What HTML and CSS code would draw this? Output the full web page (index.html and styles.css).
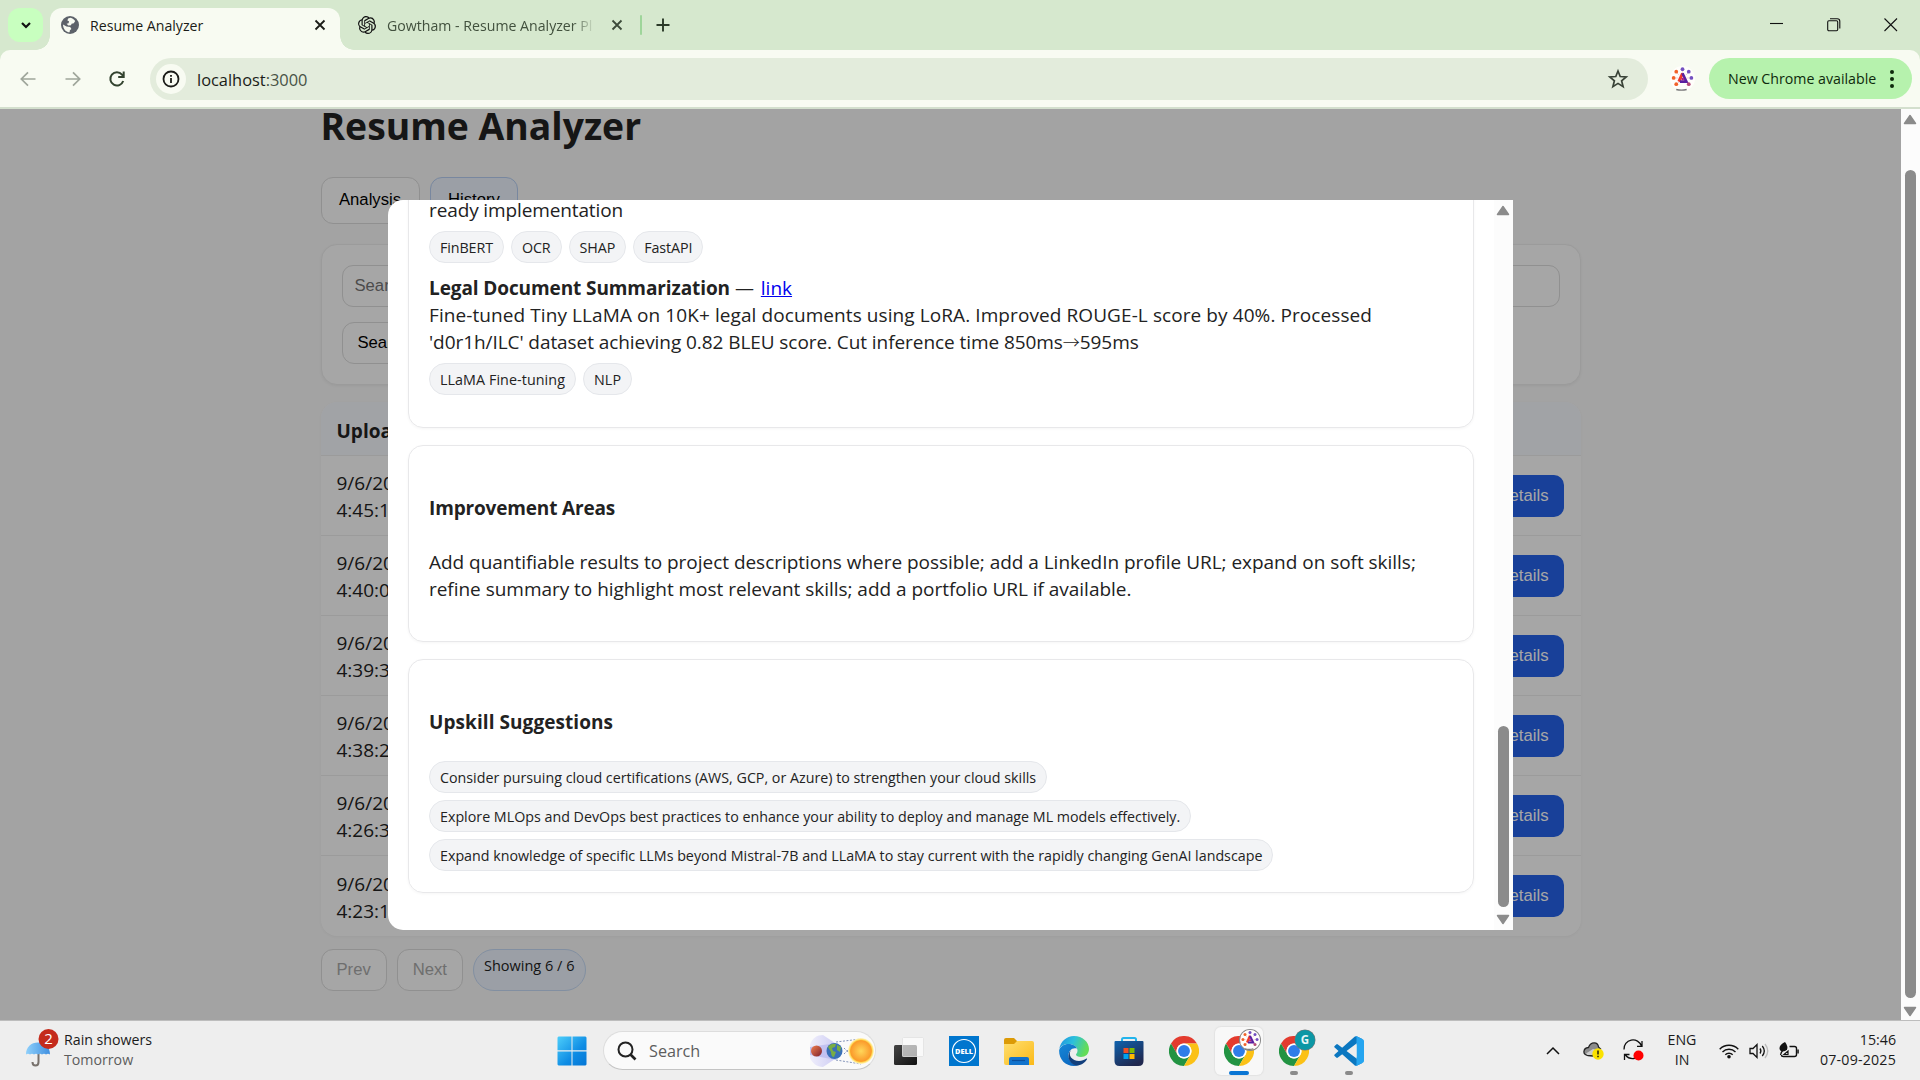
FILE: index.html
```html
<!DOCTYPE html>
<html lang="en">
<head>
<meta charset="utf-8">
<title>Resume Analyzer</title>
<link rel="stylesheet" href="styles.css">
</head>
<body>
<svg class="defs" aria-hidden="true">
  <symbol id="chrome" viewBox="0 0 48 48">
    <path fill="#e33b2e" d="M24 12H44.8A24 24 0 0 0 3.2 12L13.6 30A12 12 0 0 1 24 12Z"/>
    <path fill="#229342" d="M34.4 30L24 48A24 24 0 0 1 3.2 12L13.6 30A12 12 0 0 0 34.4 30Z"/>
    <path fill="#fbc116" d="M24 12H44.8A24 24 0 0 1 24 48L34.4 30A12 12 0 0 0 24 12Z"/>
    <circle cx="24" cy="24" r="12" fill="#fff"/><circle cx="24" cy="24" r="9.5" fill="#2f7de9"/>
  </symbol>
  <symbol id="avatar" viewBox="0 0 24 24">
    <circle cx="12" cy="12" r="12" fill="#fffefb"/>
    <g fill="none" stroke="#e8b9c9" stroke-width=".6"><path d="M12 4v4M6 6l3 3M18 6l-3 3M4 11.500h4M20 11.500h-4M6 18l3-3M18 18l-3-3"/></g>
    <path d="M12 7L8.500 15" stroke="#f0392b" stroke-width="2.800" fill="none"/>
    <path d="M12 7L15.800 15H9.500" stroke="#5a1fa0" stroke-width="2.500" fill="none"/>
    <circle cx="12.200" cy="12.500" r="1.300" fill="#b01c7c"/>
    <g fill="#f2622a"><circle cx="6" cy="5.500" r="1.800"/><circle cx="3.500" cy="11.500" r="1.800"/><circle cx="6" cy="17.500" r="1.800"/></g>
    <g fill="#7350c0"><circle cx="12" cy="3" r="1.800"/><circle cx="18" cy="5.500" r="1.800"/><circle cx="20.500" cy="11.500" r="1.800"/></g>
    <circle cx="18" cy="17.500" r="1.800" fill="#b44a78"/>
    <path d="M6 22.500q5 1.300 10 0" stroke="#777" stroke-width="1.400" fill="none"/>
  </symbol>
</svg>

<header class="tabstrip">
  <button class="tab-search"><svg width="14" height="14" viewBox="0 0 14 14"><path d="M3 5l4 4 4-4"/></svg></button>
  <div class="tab active">
    <svg class="fav" width="18" height="18" viewBox="0 0 18 18"><circle cx="9" cy="9" r="9" fill="#5d626a"/><path fill="#f8fbf2" d="M9.500 1.800c2 .6 3.600 1.700 4.700 3.200l-1.400 2.300-2.200.4-.6 1.500-2.600.3-1.800-1.800 2-.5.4-2-1.600-.8.700-2zM2 8.400l3.500 2.200 3.700.3 1.200 2.200-1.500 1.200-.3 2C4.800 15.900 2 12.800 2 8.400z"/></svg>
    <span class="tab-title">Resume Analyzer</span>
    <svg class="x" width="12" height="12" viewBox="0 0 12 12"><path d="M1.500 1.500l9 9M10.500 1.500l-9 9"/></svg>
  </div>
  <div class="tab second">
    <svg class="fav" width="18" height="18" viewBox="0 0 24 24"><path fill="#111" d="M22.282 9.821a5.985 5.985 0 0 0-.516-4.910 6.046 6.046 0 0 0-6.510-2.900A6.065 6.065 0 0 0 4.981 4.182a5.985 5.985 0 0 0-3.998 2.900 6.046 6.046 0 0 0 .743 7.097 5.980 5.980 0 0 0 .511 4.911 6.051 6.051 0 0 0 6.515 2.900A5.985 5.985 0 0 0 13.260 24a6.056 6.056 0 0 0 5.772-4.206 5.989 5.989 0 0 0 3.998-2.900 6.056 6.056 0 0 0-.748-7.073zm-9.022 12.608a4.476 4.476 0 0 1-2.876-1.041l.142-.080 4.778-2.758a.795.795 0 0 0 .393-.681v-6.737l2.020 1.169a.071.071 0 0 1 .038.052v5.583a4.504 4.504 0 0 1-4.495 4.494zm-9.661-4.125a4.471 4.471 0 0 1-.535-3.014l.142.085 4.783 2.758a.771.771 0 0 0 .781 0l5.843-3.369v2.332a.080.080 0 0 1-.033.062L9.740 19.950a4.499 4.499 0 0 1-6.141-1.646zM2.341 7.896a4.485 4.485 0 0 1 2.366-1.973V11.600a.766.766 0 0 0 .388.677l5.814 3.354-2.020 1.169a.076.076 0 0 1-.071 0l-4.830-2.787A4.504 4.504 0 0 1 2.341 7.872zm16.596 3.856L13.104 8.364 15.119 7.200a.076.076 0 0 1 .071 0l4.830 2.791a4.494 4.494 0 0 1-.677 8.104v-5.677a.790.790 0 0 0-.407-.667zm2.011-3.023l-.142-.085-4.774-2.782a.776.776 0 0 0-.785 0L9.409 9.230V6.897a.066.066 0 0 1 .028-.062l4.830-2.787a4.499 4.499 0 0 1 6.680 4.660zM8.307 12.863l-2.020-1.164a.080.080 0 0 1-.038-.057V6.074a4.499 4.499 0 0 1 7.376-3.454l-.142.081L8.704 5.459a.795.795 0 0 0-.393.681zm1.098-2.365l2.602-1.500 2.607 1.500v2.999l-2.597 1.500-2.607-1.500Z"/></svg>
    <span class="tab-title fade">Gowtham - Resume Analyzer Pl</span>
    <svg class="x dim" width="12" height="12" viewBox="0 0 12 12"><path d="M1.500 1.500l9 9M10.500 1.500l-9 9"/></svg>
  </div>
  <i class="tab-sep"></i>
  <svg class="plus" width="14" height="14" viewBox="0 0 14 14"><path d="M7 .5v13M.5 7h13"/></svg>
  <div class="winctl">
    <svg width="14" height="14" viewBox="0 0 14 14"><path d="M0 5.500h13"/></svg>
    <svg width="14" height="14" viewBox="0 0 14 14"><rect x=".7" y="2.700" width="10" height="10" rx="1.200"/><path d="M3 .7h7.300q2.500 0 2.500 2.500V10.500"/></svg>
    <svg width="14" height="14" viewBox="0 0 14 14"><path d="M.5.500l12.500 12.500M13 .5L.5 13"/></svg>
  </div>
</header>

<nav class="toolbar">
  <svg class="nav off" width="16" height="16" viewBox="0 0 16 16"><path d="M15.500 8H1.500M8 1.300L1.300 8 8 14.700"/></svg>
  <svg class="nav off" width="16" height="16" viewBox="0 0 16 16"><path d="M.5 8h14M8 1.300L14.700 8 8 14.700"/></svg>
  <svg class="nav" width="16" height="16" viewBox="0 0 16 16"><path d="M14.200 10A6.600 6.600 0 1 1 13 3.700L14.500 5.500M14.700.5v5.500H9.200"/></svg>
  <div class="omnibox">
    <span class="info"><svg width="18" height="18" viewBox="0 0 18 18"><circle cx="9" cy="9" r="7.500"/><path d="M9 8v5M9 5v1.700"/></svg></span>
    <span class="url">localhost<em>:3000</em></span>
    <svg class="star" width="20" height="20" viewBox="0 0 20 20"><path d="M10 2l2.200 5.500 6 .4-4.600 3.900 1.500 5.800L10 14.400l-5.100 3.200 1.500-5.800L1.800 7.900l6-.4z"/></svg>
  </div>
  <svg class="profile" width="25" height="25"><use href="#avatar"/></svg>
  <button class="update"><span>New Chrome available</span><i class="dots"></i></button>
</nav>

<main class="viewport">
  <div class="page">
    <div class="content">
      <h1>Resume Analyzer</h1>
      <div class="tabs"><button class="btn">Analysis</button><button class="btn on">History</button></div>
      <section class="filter">
        <input type="text" placeholder="Search by name">
        <button class="btn">Search</button>
      </section>
      <section class="table">
        <div class="thead">Uploaded</div>
        <div class="row"><p>9/6/2025,<br>4:45:10</p><button class="details">Details</button></div>
        <div class="row"><p>9/6/2025,<br>4:40:00</p><button class="details">Details</button></div>
        <div class="row"><p>9/6/2025,<br>4:39:30</p><button class="details">Details</button></div>
        <div class="row"><p>9/6/2025,<br>4:38:20</p><button class="details">Details</button></div>
        <div class="row"><p>9/6/2025,<br>4:26:30</p><button class="details">Details</button></div>
        <div class="row"><p>9/6/2025,<br>4:23:10</p><button class="details">Details</button></div>
      </section>
      <div class="pager"><button class="btn" disabled>Prev</button><button class="btn" disabled>Next</button><span class="count">Showing 6 / 6</span></div>
    </div>
    <div class="overlay">
      <div class="modal">
        <div class="modal-body">
          <section class="card projects">
            <p class="t-ready">ready implementation</p>
            <div class="chips"><span>FinBERT</span><span>OCR</span><span>SHAP</span><span>FastAPI</span></div>
            <p class="project"><b>Legal Document Summarization</b> — <a href="#">link</a></p>
            <p class="t-fine">Fine-tuned Tiny LLaMA on 10K+ legal documents using LoRA. Improved ROUGE-L score by 40%. Processed</p>
            <p class="t-data">'d0r1h/ILC' dataset achieving 0.82 BLEU score. Cut inference time 850ms<span class="arrow">→</span>595ms</p>
            <div class="chips wide"><span>LLaMA Fine-tuning</span><span>NLP</span></div>
          </section>
          <section class="card areas">
            <h3 class="t-imp">Improvement Areas</h3>
            <p>Add quantifiable results to project descriptions where possible; add a LinkedIn profile URL; expand on soft skills;<br>refine summary to highlight most relevant skills; add a portfolio URL if available.</p>
          </section>
          <section class="card upskill">
            <h3>Upskill Suggestions</h3>
            <div class="chips column">
              <span>Consider pursuing cloud certifications (AWS, GCP, or Azure) to strengthen your cloud skills</span>
              <span>Explore MLOps and DevOps best practices to enhance your ability to deploy and manage ML models effectively.</span>
              <span>Expand knowledge of specific LLMs beyond Mistral-7B and LLaMA to stay current with the rapidly changing GenAI landscape</span>
            </div>
          </section>
        </div>
        <div class="scrollbar inner"><svg width="14" height="11" viewBox="0 0 14 11"><path d="M7 1.500L12.500 9.500h-11z"/></svg><i></i><svg width="14" height="11" viewBox="0 0 14 11"><path d="M7 9.500L1.500 1.500h11z"/></svg></div>
      </div>
    </div>
  </div>
  <div class="scrollbar outer"><svg width="14" height="11" viewBox="0 0 14 11"><path d="M7 1.500L12.500 9.500h-11z"/></svg><i></i><svg width="14" height="11" viewBox="0 0 14 11"><path d="M7 9.500L1.500 1.500h11z"/></svg></div>
</main>

<footer class="taskbar">
  <div class="weather">
    <svg width="35" height="40" viewBox="0 0 35 40">
      <defs><linearGradient id="um" x2="1"><stop offset="0" stop-color="#8fd0fb"/><stop offset="1" stop-color="#3f8fe0"/></linearGradient></defs>
      <path d="M12.500 22v9q0 3.500-3 3.500T6.500 31" fill="none" stroke="#77716c" stroke-width="2"/>
      <path d="M0 23.500C0 16 5 11.500 12 11.500s12 4.500 12 12q-2-1.700-4 0-2-1.700-4 0-2-1.700-4 0-2-1.700-4 0-2-1.700-4 0-2-1.700-4 0z" fill="url(#um)"/>
      <circle cx="22.500" cy="8" r="10" fill="#c42b1c"/>
      <text x="22.500" y="13.300" text-anchor="middle" fill="#fff" font-size="15">2</text>
    </svg>
    <div class="forecast"><span>Rain showers</span><span class="t-tom">Tomorrow</span></div>
  </div>
  <svg class="start" width="30" height="30" viewBox="0 0 30 30">
    <defs><linearGradient id="win" x2="1" y2="1" gradientUnits="userSpaceOnUse" gradientTransform="scale(30)"><stop offset="0" stop-color="#4fd0fb"/><stop offset=".6" stop-color="#0e8ce4"/><stop offset="1" stop-color="#0474d4"/></linearGradient></defs>
    <path fill="url(#win)" d="M1.500.5H14.500v13.800H.5V1.500zM15.500.5H28.500l1 1v12.800H15.500zM.5 15.500H14.500v14H1.500l-1-1zM15.500 15.500H29.500v13l-1 1H15.500z"/>
  </svg>
  <div class="search">
    <svg width="20" height="20" viewBox="0 0 20 20"><circle cx="8.500" cy="8.500" r="7" fill="none" stroke="#222" stroke-width="2"/><path d="M13.500 13.500l5 5" stroke="#222" stroke-width="2.600"/></svg>
    <span>Search</span>
    <svg class="orbit" width="66" height="34" viewBox="0 0 66 34">
      <defs>
        <linearGradient id="beam" x2="1"><stop offset="0" stop-color="#efeefb"/><stop offset="1" stop-color="#cfcef4"/></linearGradient>
        <radialGradient id="sun"><stop offset="0" stop-color="#ffd75a"/><stop offset=".8" stop-color="#fb9a2b"/><stop offset=".83" stop-color="#fdbb36"/><stop offset=".9" stop-color="#ffe373"/><stop offset="1" stop-color="#fff6d0"/></radialGradient>
        <linearGradient id="mars" x2="1" y2="1"><stop offset="0" stop-color="#f2804f"/><stop offset="1" stop-color="#7c1f2e"/></linearGradient>
      </defs>
      <path d="M2 11C4 4 9 1 15 1L27 9V25L15 33C9 33 4 29 2 24z" fill="url(#beam)"/><path d="M2 13L28 9v17L2 21z" fill="#c3c2f1"/>
      <path d="M28 8L53 5M28 26l25 4M36 14l6 6M36 20l6-6" stroke="#6578a8" stroke-width=".8" stroke-dasharray="2 1.500"/>
      <circle cx="8.500" cy="17" r="5.500" fill="url(#mars)"/>
      <circle cx="26.500" cy="17" r="8" fill="#3a70b8"/><path d="M20 13q3-4 8-3l-1 3-3 1 1 3 3 1-2 5q-3 0-3-5zM29 11l4 2-1 5-3-2z" fill="#79ad45"/>
      <circle cx="53" cy="17" r="13" fill="url(#sun)"/>
    </svg>
  </div>
  <div class="apps">
    <span class="tile"><svg width="30" height="30" viewBox="0 0 30 30"><defs><linearGradient id="tv" x2="1" y2="1"><stop offset="0" stop-color="#444"/><stop offset="1" stop-color="#111"/></linearGradient></defs><rect x="0" y="9" width="23" height="20" rx="1.500" fill="url(#tv)"/><rect x="8" y="1" width="22" height="20" rx="1.500" fill="#fff" fill-opacity=".5"/><rect x="8.500" y="1.500" width="21" height="19" rx="1" fill="#fff" fill-opacity=".3" stroke="#ddd" stroke-opacity=".7"/></svg></span>
    <span class="tile"><svg width="30" height="30" viewBox="0 0 30 30"><path fill="#0076ce" d="M0 0h30v30H0z"/><circle cx="15" cy="15" r="11.500" fill="none" stroke="#fff" stroke-width="1.200"/><text x="15" y="17.900" font-size="7.500" font-weight="800" text-anchor="middle" textLength="18" lengthAdjust="spacingAndGlyphs" fill="#fff">DELL</text></svg></span>
    <span class="tile"><svg width="30" height="30" viewBox="0 0 30 30"><defs><linearGradient id="fo" x2="1" y2="1"><stop offset="0" stop-color="#ffdf70"/><stop offset="1" stop-color="#fbb917"/></linearGradient></defs><path fill="#dc9a06" d="M0 4q0-2 2-2h8l3 3v5H0z"/><path fill="url(#fo)" d="M0 8h10l3-3h15q2 0 2 2v22H2q-2 0-2-2z"/><path fill="#1273cc" d="M5 29v-6q0-2 2-2h16q2 0 2 2v6z"/><path d="M8 24.500h13" stroke="#0b4f9c" stroke-width="1.200"/></svg></span>
    <span class="tile"><svg width="30" height="30" viewBox="0 0 30 30"><defs><linearGradient id="e1" x2="1" y2=".3"><stop offset="0" stop-color="#2090e0"/><stop offset=".5" stop-color="#2cc0dc"/><stop offset="1" stop-color="#64dc58"/></linearGradient><linearGradient id="e2" x2=".6" y2="1"><stop offset="0" stop-color="#1688d8"/><stop offset="1" stop-color="#0c68c0"/></linearGradient></defs><path fill="url(#e1)" d="M.3 13C1.500 5.500 7.500 0 15 0c8.500 0 15 6 15 13 0 5-3.500 8-8 8-3 0-5-1-5-2.200 0-1 1.500-1.700 1.500-4.300 0-3.500-4-6.500-8.500-6.500C5 8 1.500 10 .3 13z"/><path fill="url(#e2)" d="M.1 14.500C1 10.500 5 8 9.500 8c4.500 0 7.500 2.200 8.500 4.500-5-1.500-8.500 2.500-8.500 7 0 5 4 10 10 9.500-1.500.7-3 1-4.500 1C6.500 30 0 23.500.1 14.500z"/><path fill="#123f7c" d="M12 14c-3.500 5 1 11 8 11 3 0 5-.9 7.500-2.500.5-.2.800.2.500.7C26 26.500 22 29.500 17.500 29.500 11 28.500 6.500 20 12 14z"/></svg></span>
    <span class="tile"><svg width="30" height="30" viewBox="0 0 30 30"><defs><linearGradient id="st" x2=".6" y2="1"><stop offset="0" stop-color="#0f62ae"/><stop offset="1" stop-color="#20284f"/></linearGradient></defs><path d="M8 7V3.500q0-1.500 1.500-1.500h11q1.500 0 1.500 1.500V7" fill="none" stroke="#22b4ec" stroke-width="2"/><path fill="url(#st)" d="M.5 6q0-1 1-1h27q1 0 1 1v19q0 5-5 5h-19q-5 0-5-5z"/><path fill="#f25022" d="M9.500 12h5v5h-5z"/><path fill="#7fba00" d="M15.500 12h5v5h-5z"/><path fill="#00a4ef" d="M9.500 18h5v5h-5z"/><path fill="#ffb900" d="M15.500 18h5v5h-5z"/></svg></span>
    <span class="tile"><svg width="30" height="30"><use href="#chrome"/></svg></span>
    <span class="tile current"><svg width="30" height="30"><use href="#chrome"/></svg><svg class="badge ring" width="20" height="20"><use href="#avatar"/></svg></span>
    <span class="tile open"><svg width="30" height="30"><use href="#chrome"/></svg><b class="badge g">G</b></span>
    <span class="tile open"><svg width="30" height="30" viewBox="0 0 100 100"><path fill="#0b77c0" d="M96 11L75.500 1q-4-1.500-7 1.500L2 62q-3 3 0 5l5.500 5q2.500 2 5.500 0L95 10z"/><path fill="#0b77c0" d="M96 89L75.500 99q-4 1.500-7-1.500L2 38q-3-3 0-5l5.500-5q2.500-2 5.500 0L95 90z"/><path fill="#25a5f0" d="M75.500 99q-4 1.500-7-1.500 5 3 6.500-3.500V6q-1.500-6.500-6.500-3.500 3-3 7-1.500L96 11q4 2 4 6v66q0 4-4 6z"/><path fill="#eee" d="M75 28v44L47 50z"/></svg></span>
  </div>
  <div class="tray">
    <svg class="chev" width="14" height="8" viewBox="0 0 14 8"><path d="M1 7l6-6 6 6" fill="none" stroke="#111" stroke-width="1.500"/></svg>
    <svg class="cloud" width="21" height="18" viewBox="0 0 21 18"><path d="M5 13.500C-1 13 0 6 5.500 5.500 8-1 15 0 15.500 5l2 2-8 7z" fill="#8c8c8c" stroke="#222" stroke-width="1.300"/><path d="M3 11.500l7-4.500 4 1-5 5H4.500z" fill="#ccc"/><circle cx="15" cy="12" r="5.700" fill="#fbe200"/><path d="M15 8.500v4M15 13.800v1.500" stroke="#111" stroke-width="1.400"/></svg>
    <svg class="sync" width="21" height="21" viewBox="0 0 21 21"><path d="M1 9.500A9 9 0 0 1 18.500 6M19 1v5.300h-5M18 13A9 9 0 0 1 2.500 15M1.500 20v-5.500h5" fill="none" stroke="#111" stroke-width="1.300"/><circle cx="15.500" cy="15.500" r="5" fill="#f00"/></svg>
    <div class="lang"><span>ENG</span><span>IN</span></div>
    <svg class="wifi" width="20" height="16" viewBox="0 0 20 16"><g fill="none" stroke="#111" stroke-width="1.400"><path d="M.7 6.200a13 13 0 0 1 18.600 0M3.500 9a9.200 9.200 0 0 1 13 0M6.300 11.800a5.200 5.200 0 0 1 7.400 0"/></g><circle cx="10" cy="13.800" r="1.800" fill="#111"/></svg>
    <svg class="vol" width="20" height="18" viewBox="0 0 20 18"><g fill="none" stroke="#111" stroke-width="1.300"><path d="M1 6.500h3l4-4v13l-4-4H1zM11 6.500q1.800 2.500 0 5M13.300 4q4 5 0 10"/><path d="M16 2q5.500 7 0 14" stroke="#bbb"/></g></svg>
    <svg class="bat" width="20" height="18" viewBox="0 0 20 18"><path d="M10.500 4.500h5q2 0 2 2v6q0 2-2 2h-11q-2 0-2-1.500" fill="none" stroke="#111" stroke-width="1.400"/><path d="M18.300 7.500h1.500v4h-1.500z" fill="#111"/><path d="M6 0q3.500 4.500 2 7.500-1.500 2-4.500 2-2.500-.5-3-2.500Q0 3 6 0z" fill="#111"/><path d="M1.500 13q.5-3 3-5.500M5 12.500l4-3.500v3.500z" fill="none" stroke="#111" stroke-width="1.200"/></svg>
    <div class="clock"><span>15:46</span><span class="date">07-09-2025</span></div>
  </div>
</footer>
</body>
</html>
```

FILE: styles.css
```css
*{box-sizing:border-box}
body{margin:0;width:1920px;height:1080px;overflow:hidden;display:flex;flex-direction:column;background:#d6e8ce;font-family:"Open Sans","Noto Sans",sans-serif;color:#222}
svg{display:block;flex:none;overflow:visible}
p,h1,h3{margin:0}
button{border:0;background:none;padding:0;font:inherit;color:inherit}
.defs{position:absolute;width:0;height:0}

/* Browser tabs */
.tabstrip{height:50px;flex:none;display:flex;padding:8px 0 0 8px}
.tab-search{width:35px;height:34px;border-radius:12px;background:#c8ffbf;display:grid;place-items:center}
.tab-search path{fill:none;stroke:#111;stroke-width:2.2}
.tab{display:flex;align-items:center;height:42px;font-size:14.15px}
.tab.active{position:relative;margin-left:7px;width:290px;padding:0 14px 8px 11px;background:#f8fbf2;border-radius:12px 12px 0 0;color:#1b1c18}
.tab.active::before,.tab.active::after{content:"";position:absolute;bottom:0;width:14px;height:14px}
.tab.active::before{left:-14px;background:radial-gradient(circle at 0 0,transparent 13.5px,#f8fbf2 14px)}
.tab.active::after{right:-14px;background:radial-gradient(circle at 100% 0,transparent 13.5px,#f8fbf2 14px)}
.tab-title{margin-left:11px;flex:1;white-space:nowrap;line-height:22px;padding-top:1px}
.x path{stroke:#1b1c18;stroke-width:1.8}
.x.dim path{stroke:#3d4b3a}
.tab.second{padding:0 0 8px 18px;width:283px;color:#42513e}
.tab.second .tab-title{flex:none;width:210px;margin-right:14px}
.fade{-webkit-mask-image:linear-gradient(90deg,#000 185px,transparent 208px)}
.tab-sep{width:2px;height:20px;margin:7px 0 0 17px;background:#9ed59a;border-radius:1px}
.plus{margin:10px 0 0 14px}
.plus path{stroke:#2b3a28;stroke-width:1.9}
.winctl{margin:10px 22px 0 auto;display:flex;gap:43px}
.winctl path,.winctl rect{fill:none;stroke:#111;stroke-width:1.1}

/* Browser toolbar */
.toolbar{height:59px;flex:none;display:flex;align-items:center;background:#f8fbf2;border-radius:10px 10px 0 0;border-bottom:2px solid #d3dfcd;padding:0 8px 0 20px}
.nav{margin-right:28.5px}
.nav path{fill:none;stroke:#33432f;stroke-width:2}
.nav.off path{stroke:#9fa69b;stroke-width:1.7}
.nav.off+.nav:not(.off){margin-right:25px}
.omnibox{width:1498px;height:42px;border-radius:21px;background:#e3ecdc;display:flex;align-items:center;padding:0 20px 0 6px}
.info{width:30px;height:30px;border-radius:50%;background:#f8fbf2;display:grid;place-items:center}
.info circle,.info path{fill:none;stroke:#1b1c18;stroke-width:1.8}
.url{font-size:16.4px;margin-left:11px;flex:1;color:#1b1c18;padding-top:1px}
.url em{font-style:normal;color:#485245}
.star path{fill:none;stroke:#384236;stroke-width:1.7}
.profile{margin-left:22px}
.update{margin-left:auto;width:203px;height:41px;border-radius:21px;background:#b6f2ad;display:flex;align-items:center;padding-left:19px;font-size:14.2px;color:#0e2a0c;white-space:nowrap}
.dots{width:4px;height:4px;border-radius:50%;background:#0e2a0c;margin-left:13.5px;box-shadow:0 -7px #0e2a0c,0 7px #0e2a0c}

/* Page */
.viewport{height:911px;flex:none;display:flex;background:#fafafa}
.page{position:relative;flex:1;overflow:hidden;font-size:19px;line-height:27px}
.content{width:1260px;margin:0 auto;display:flow-root}
h1{font-size:37.3px;line-height:50px;margin:-8px 0 26px}
.btn{height:42px;padding:0 15px;border:1px solid #ddd;border-radius:12px;background:#fff;font:16.67px "Liberation Sans",Arial,sans-serif;color:#000}
.tabs{display:flex;gap:10px;height:47px}
.tabs .btn{height:47px;padding:0 17.5px 2px}
.tabs .btn.on{background:#eef5ff;border-color:#b8d0f5}
.filter{height:141px;margin-top:20px;padding:20px;background:#fff;border:1px solid #eee;border-radius:16px;box-shadow:0 1px 3px rgba(0,0,0,.05)}
.filter input{display:block;width:100%;height:42px;border:1px solid #ddd;border-radius:11px;padding:0 12px;font:16.67px "Liberation Sans",Arial,sans-serif;background:#fff;margin-bottom:15px}
.table{margin-top:17px;background:#fff;border-radius:16px;overflow:hidden;box-shadow:0 1px 3px rgba(0,0,0,.04)}
.thead{height:54px;padding:16px 16px 0;background:#f8faff;border-bottom:1px solid #eee;font-weight:700}
.row{display:flex;justify-content:space-between;align-items:center;height:80px;padding:0 17px 0 16px;border-bottom:1px solid #eee}
.row p{padding-top:3px}
.row:last-child{border:0}
.details{height:42px;width:125px;padding-right:15px;text-align:right;border-radius:10px;background:#2563eb;color:#fff;font:16.67px "Liberation Sans",Arial,sans-serif}
.pager{display:flex;gap:10px;margin-top:13px}
.pager .btn:disabled{color:#aaa}
.count{height:42px;border:1px solid #c8dcf8;border-radius:21px;background:#eef5ff;padding:4px 10.500px 0 10px;font-size:14.5px;line-height:24px}

/* Details dialog */
.overlay{position:absolute;inset:0;background:rgba(0,0,0,.35);display:grid;place-items:center}
.modal{width:1125px;height:730px;display:flex;background:#fff;border-radius:15px 0 0 15px;overflow:hidden;position:relative;top:.5px}
.modal-body{width:1106px;padding:0 20px 37px;display:flex;flex-direction:column;justify-content:flex-end;gap:17px;white-space:nowrap}
.card{flex:none;border:1px solid #e8e8ea;border-radius:15px;padding:0 20px;box-shadow:0 1px 3px rgba(0,0,0,.04)}
.projects{padding:30px 20px 32px}
.areas{height:197px;padding-top:49px}
.upskill{height:234px;padding-top:49px}
.card h3{font-size:19px;line-height:27px;margin-bottom:25px;letter-spacing:.07px}
.card .t-imp{letter-spacing:-.16px;margin-bottom:27px}
.areas p{letter-spacing:-.03px}
.t-ready{letter-spacing:-.12px}
.t-fine{letter-spacing:.086px}
.t-data{letter-spacing:-.07px}
.arrow{display:inline-block;width:17px;font:300 17px/20px "Noto Sans CJK JP","DejaVu Sans",sans-serif;text-align:center}
.project b{letter-spacing:-.1px}
.project a{color:#00e;margin-left:2px}
.chips{display:flex;gap:7px;margin:7px 0 12.500px;font-size:14.3px}
.projects .chips span{letter-spacing:-.1px}
.projects .chips.wide{margin-bottom:0}
.projects .chips.wide span{letter-spacing:.08px}
.chips span{height:32px;line-height:31px;padding:0 10px;border:1px solid #e5e7eb;border-radius:16px;background:#f3f4f6}
.chips.column{flex-direction:column;align-items:flex-start;margin:0;font-size:14.280px}

.scrollbar{width:19px;background:#fcfcfc;display:flex;flex-direction:column;align-items:center;padding:5px 1px 0 0}
.scrollbar path{fill:#8b8b8b;stroke:#8b8b8b;stroke-width:1.500;stroke-linejoin:round}
.scrollbar i{width:11px;border-radius:6px;background:#8b8b8b}
.inner i{height:181px;margin:510px 0 7px}
.outer i{height:828px;margin:45px 0 8px}

/* Taskbar */
.taskbar{height:60px;flex:none;background:#eee;border-top:1px solid #bdbdbd;display:flex;align-items:center;color:#1b1b1b;font-size:14.2px}
.weather{width:557px;padding-left:26px;display:flex;align-items:center;gap:3px}
.weather span,.lang span,.clock span{display:block;line-height:20px}
.forecast,.lang,.clock{padding-bottom:2px}
.weather .t-tom{color:#5d5d5d}
.search{width:273px;height:39px;margin-left:16px;border:1px solid #ddd;border-bottom-color:#c4c4c4;border-radius:20px;background:#fafafa;display:flex;align-items:center;padding:0 1px 0 13px;font-size:16.2px;color:#5d5d5d}
.search span{margin-left:12px;flex:1}
.apps{display:flex;gap:7px;margin-left:9px}
.tile{position:relative;width:48px;height:48px;border-radius:6px;display:grid;place-items:center}
.current{background:#f8f8f8;box-shadow:0 0 1px 1px #e3e3e3}
.current::after,.open::after{content:"";position:absolute;left:20px;bottom:0;width:8px;height:4px;border-radius:2px;background:#8a8a8a}
.current::after{left:14px;width:20px;background:#0a75d4}
.badge{position:absolute;right:3px;top:3px;width:20px;height:20px;border-radius:50%}
.ring{box-shadow:0 0 0 1px #888}
.g{background:#0c97a5;color:#e8f6f7;font-size:11.500px;line-height:20px;text-align:center;box-shadow:0 0 0 .5px #777}
.tray{margin-left:auto;display:flex;align-items:center;padding-right:24px}
.cloud{margin-left:23px}
.sync{margin-left:19px}
.lang{width:32px;margin-left:22px;text-align:center}
.wifi{margin-left:21px}
.vol,.bat{margin-left:10px}
.clock{width:97px;text-align:right}
.date{letter-spacing:.2px}
```
